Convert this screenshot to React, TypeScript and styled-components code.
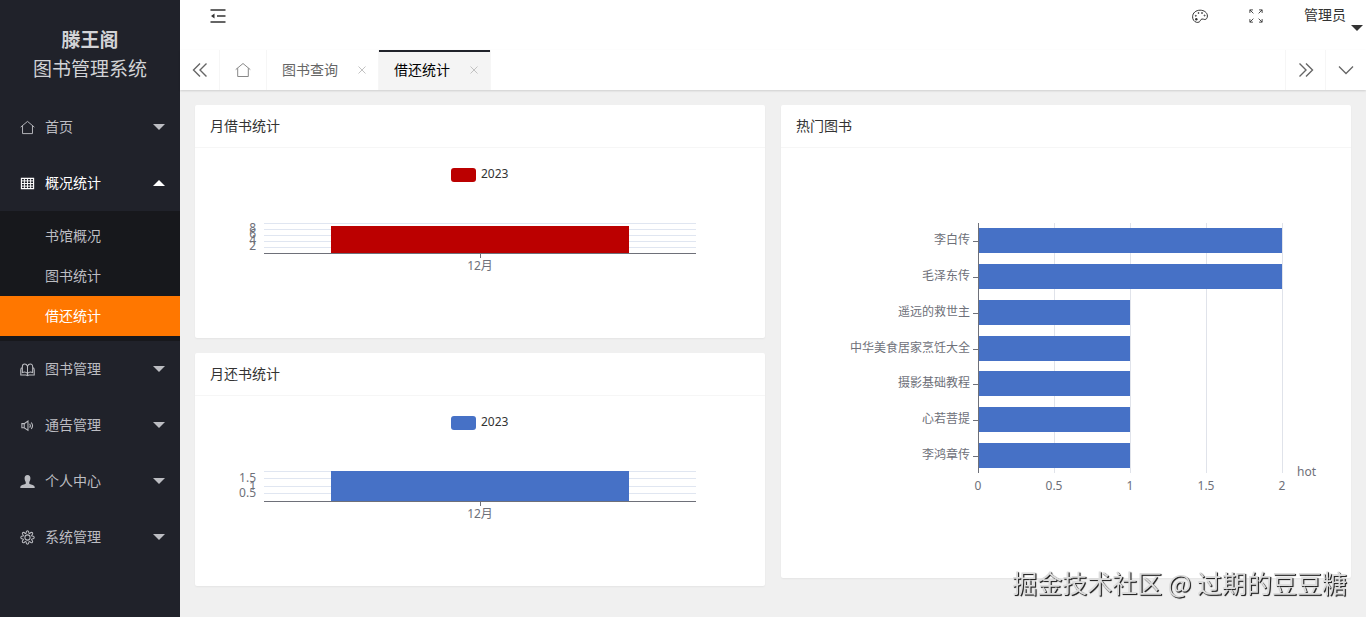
import React from "react";
import styled, { createGlobalStyle, css } from "styled-components";

const GlobalStyle = createGlobalStyle`
  *, *::before, *::after { box-sizing: border-box; }
  body {
    margin: 0;
    background: #f0f0f0;
    color: #333;
    font-family: "Noto Sans", "Noto Sans CJK SC", sans-serif;
    font-size: 14px;
    line-height: 24px;
  }
  a { color: inherit; text-decoration: none; }
  ul { margin: 0; padding: 0; list-style: none; }
  button {
    margin: 0; padding: 0; border: 0; background: none;
    color: inherit; font: inherit; cursor: pointer;
  }
  svg { display: block; flex: none; }
`;

const cjk = `"Noto Sans CJK SC", "Noto Sans", sans-serif`;

const Shell = styled.div`
  display: flex;
  min-height: 100vh;
`;

/* ---------- sidebar ---------- */

const Sidebar = styled.aside`
  flex: none;
  width: 180px;
  background: #20222a;
  color: #bcbdc2;
  font-family: ${cjk};
`;

const Brand = styled.h1`
  margin: 0;
  padding: 24px 0 17px;
  font-size: 19px;
  line-height: 29px;
  font-weight: 400;
  text-align: center;
  color: #d2d3d6;
`;

const BrandName = styled.strong`
  display: block;
  font-weight: 700;
`;

const Group = styled.button<{ $open?: boolean }>`
  display: flex;
  align-items: center;
  width: 100%;
  height: 56px;
  padding: 0 15px 0 20px;
  color: ${(p) => (p.$open ? "#fff" : "inherit")};

  span {
    flex: 1;
    padding-bottom: 2px;
    margin-left: 10px;
    text-align: left;
  }
`;

const SubMenu = styled.ul`
  padding: 5px 0;
  background: #17181c;
`;

const SubLink = styled.a<{ $active?: boolean }>`
  display: block;
  padding: 0 0 2px 45px;
  line-height: 38px;
  ${(p) =>
    p.$active &&
    css`
      background: #ff7700;
      color: #fff;
    `}
`;

/* ---------- header and tabs ---------- */

const Main = styled.div`
  flex: 1;
  min-width: 0;
`;

const TopBar = styled.header`
  display: flex;
  align-items: flex-start;
  justify-content: space-between;
  height: 50px;
  background: #fff;
`;

const TopTools = styled.div`
  display: flex;
`;

const IconButton = styled.button<{ $wide?: boolean }>`
  display: flex;
  align-items: center;
  justify-content: center;
  width: ${(p) => (p.$wide ? 76 : 56)}px;
  height: 32px;
`;

const UserButton = styled.button`
  display: flex;
  align-items: center;
  gap: 5px;
  height: 32px;
  padding: 0 3px 4px 20px;
  font-family: ${cjk};

  svg { margin-top: 28px; }
`;

const TabBar = styled.nav`
  position: relative;
  display: flex;
  height: 40px;
  padding-right: 1px;
  background: #fff;
  box-shadow: 0 1px 2px rgba(0, 0, 0, 0.14);
  color: #666;
`;

const TabControl = styled.button<{ $side: "left" | "right" }>`
  display: flex;
  flex: none;
  align-items: center;
  justify-content: center;
  width: 40px;
  border-${(p) => (p.$side === "left" ? "right" : "left")}: 1px solid #f6f6f6;
`;

const Tabs = styled.ul`
  display: flex;
  flex: 1;
`;

const Tab = styled.li<{ $active?: boolean }>`
  display: flex;
  align-items: center;
  gap: 16px;
  padding: 0 8px 0 15px;
  border-right: 1px solid #f6f6f6;
  font-family: ${cjk};

  a { padding-bottom: 2px; }
  ${(p) =>
    p.$active &&
    css`
      background: #f4f4f4;
      color: #000;
      box-shadow: inset 0 2px #20222a;
    `}
`;

const HomeTab = styled(Tab)`
  padding: 0 15px;
  color: #888;

  a { padding-bottom: 0; }
`;

const CloseButton = styled.button`
  display: flex;
  align-items: center;
  justify-content: center;
  width: 16px;
  height: 16px;
  color: #c2c2c2;
`;

/* ---------- cards ---------- */

const Content = styled.main`
  display: grid;
  grid-template-columns: repeat(2, minmax(0, 1fr));
  align-items: start;
  gap: 16px;
  padding: 15px;
`;

const Column = styled.div`
  display: grid;
  gap: 15px;
`;

const Card = styled.section`
  border-radius: 2px;
  background: #fff;
  box-shadow: 0 1px 2px rgba(0, 0, 0, 0.05);
`;

const CardTitle = styled.h2`
  margin: 0;
  padding: 0 15px 2px;
  border-bottom: 1px solid #f6f6f6;
  font-family: ${cjk};
  font-size: 14px;
  font-weight: 400;
  line-height: 40px;
`;

const CardBody = styled.div<{ $tail: number }>`
  padding: 15px 15px ${(p) => p.$tail}px;
`;

const Chart = styled.svg`
  width: 100%;
  height: auto;
  font-size: 12px;
  fill: #6e7079;

  rect { shape-rendering: crispEdges; }
  rect[rx] { shape-rendering: auto; }
`;

const Watermark = styled.div`
  position: fixed;
  right: 19px;
  bottom: 17px;
  color: #dcdcdc;
  font-family: ${cjk};
  font-size: 25px;
  line-height: 36px;
  text-shadow: 1px 1px 1px #222, 1px 1px 0 #555;
  white-space: nowrap;
  pointer-events: none;
`;

/* ---------- icons ---------- */

type IconProps = { size?: number; children: React.ReactNode; width?: number };

const Icon = ({ size = 15, width = 1, children }: IconProps) => (
  <svg width={size} height={size} viewBox="0 0 16 16" fill="none" stroke="currentColor" strokeWidth={width} aria-hidden="true">
    {children}
  </svg>
);

const HomeIcon = ({ size }: { size?: number }) => (
  <Icon size={size}>
    <path d="M.7 7.600 8 1.500l7.300 6.100M2.700 6.200v8.300h10.600V6.200" strokeLinejoin="round" />
  </Icon>
);

const GridIcon = () => (
  <Icon>
    <path d="M1.500 2.500h13v11h-13z" strokeWidth="1.200" />
    <path d="M1.500 5.200h13M1.500 8h13M1.500 10.800h13M4.700 2.500v11M8 2.500v11M11.300 2.500v11" />
  </Icon>
);

const BookIcon = () => (
  <Icon width={1.1}>
    <path d="M8 4.500C7.300 2.800 6.300 2.200 5 2.200 3.300 2.200 2.500 3.300 2.500 5v6.300c1.800-.9 4-.6 5.500.9 1.500-1.500 3.700-1.800 5.500-.9V5c0-1.700-.8-2.800-2.500-2.800-1.300 0-2.300.6-3 2.300zM8 4.500v9.300M2.500 5.500C1.500 6 .8 7 .8 8.500v5.300h5.700L8 14.500l1.500-.7h5.700V8.500c0-1.500-.7-2.500-1.700-3" />
  </Icon>
);

const SpeakerIcon = () => (
  <Icon width={1.1}>
    <path d="M2 6h2.500L8.500 3.200v10l-4-2.800H2zM4.500 6v4.400M10.300 6.200c.9 1.200.9 2.900 0 4.100M12 4.800c1.600 2 1.600 4.900 0 6.900" />
  </Icon>
);

const PersonIcon = () => (
  <Icon>
    <path
      d="M8 1c2.100 0 3.200 1.500 3.100 3.800-.1 1.700-.6 2.800-1.200 3.600v1.900c.9.800 4.900 1.200 5.500 2.700.3.700.3 1.300.3 2H.3c0-.7 0-1.300.3-2 .6-1.500 4.600-1.900 5.500-2.700V8.400c-.6-.8-1.100-1.900-1.200-3.600C4.800 2.500 5.900 1 8 1z"
      fill="currentColor"
      stroke="none"
    />
  </Icon>
);

const GearIcon = () => (
  <Icon width={1.1}>
    <path
      d="M6.500 3.200C6.500 1.800 7 .8 8 .8s1.500 1 1.500 2.400c0 .5.600.7 1 .4 1-1 2-1.400 2.700-.7.700.7.300 1.700-.7 2.700-.3.400-.1.900.4.900 1.400 0 2.300.5 2.300 1.500s-.9 1.500-2.300 1.500c-.5 0-.7.600-.4 1 1 1 1.400 2 .7 2.700-.7.700-1.700.3-2.700-.7-.4-.3-1-.1-1 .4 0 1.400-.5 2.300-1.500 2.300s-1.500-.9-1.500-2.300c0-.5-.6-.7-1-.4-1 1-2 1.400-2.700.7-.7-.7-.3-1.700.7-2.700.3-.4.1-1-.4-1C1.700 9.500.8 9 .8 8s.9-1.500 2.300-1.500c.5 0 .7-.5.4-.9-1-1-1.400-2-.7-2.700.7-.7 1.700-.3 2.700.7.400.3 1 .1 1-.4z"
    />
    <circle cx="8" cy="8" r="2.800" />
  </Icon>
);

const FoldIcon = () => (
  <Icon size={16} width={1.5}>
    <path d="M.5 2h15M7 8h8.500M.5 14h15" />
    <path d="M1 8 4.500 5.500v5z" fill="currentColor" stroke="none" />
  </Icon>
);

const PaletteIcon = () => (
  <Icon size={16}>
    <path d="M4.500 14.300C2 13.600.6 11.500.6 8.800c0-3.900 3.300-6.600 7.500-6.600 4 0 7.300 2.400 7.300 5.800 0 2.100-1 3.500-2.600 3.500-1 0-1.800-.7-2.800-.5-1.700.3-1.300 2.100-2.700 2.900-.9.600-1.900.6-2.800.4z" />
    <circle cx="4.300" cy="11.300" r="1.200" fill="currentColor" stroke="none" />
    <circle cx="3.800" cy="7.800" r=".5" />
    <circle cx="6.500" cy="5" r=".5" />
    <circle cx="10" cy="5" r=".5" />
    <circle cx="12.600" cy="7.500" r=".5" />
  </Icon>
);

const FullscreenIcon = () => (
  <Icon size={14}>
    <path d="M1 4.500V1h3.500M1 1l4 4M11.500 1H15v3.500M15 1l-4 4M1 11.500V15h3.500M1 15l4-4M11.500 15H15v-3.500M15 15l-4-4" />
  </Icon>
);

const DoubleChevron = ({ dir }: { dir: "left" | "right" }) => (
  <Icon size={16} width={1.4}>
    <path d={dir === "left" ? "M8 1.500 1.500 8 8 14.500M14.500 1.500 8 8l6.500 6.500" : "M1.500 1.500 8 8l-6.500 6.500M8 1.500 14.500 8 8 14.500"} />
  </Icon>
);

const Caret = ({ up }: { up?: boolean }) => (
  <svg width="12" height="6" viewBox="0 0 12 6" fill="currentColor" aria-hidden="true">
    <path d={up ? "M0 6 6 0l6 6z" : "M0 0h12L6 6z"} />
  </svg>
);

/* ---------- charts ---------- */

type MonthlyProps = {
  label: string;
  color: string;
  barTop: number;
  lines: number[];
  ticks: { text: string; y: number }[];
};

const MonthlyChart = ({ label, color, barTop, lines, ticks }: MonthlyProps) => (
  <Chart viewBox="0 0 540 150" role="img" aria-label={label}>
    <rect x="241" y="5" width="25" height="14" rx="3" fill={color} />
    <text x="271" y="15" fill="#333">2023</text>
    {lines.map((y) => (
      <rect key={y} x="54" y={y} width="432" height="1" fill="#e0e6f1" />
    ))}
    <rect x="121" y={barTop} width="298" height={90 - barTop} fill={color} />
    <rect x="54" y="90" width="432" height="1" fill="#6e7079" />
    <rect x="270" y="90" width="1" height="5" fill="#6e7079" />
    {ticks.map((t) => (
      <text key={t.text} x="46" y={t.y} textAnchor="end">{t.text}</text>
    ))}
    <text x="270" y="107" textAnchor="middle">12月</text>
  </Chart>
);

const books = [
  { name: "李白传", hot: 2 },
  { name: "毛泽东传", hot: 2 },
  { name: "遥远的救世主", hot: 1 },
  { name: "中华美食居家烹饪大全", hot: 1 },
  { name: "摄影基础教程", hot: 1 },
  { name: "心若菩提", hot: 1 },
  { name: "李鸿章传", hot: 1 },
];

const HotChart = () => (
  <Chart viewBox="0 0 540 400" role="img" aria-label="热门图书">
    {[0.5, 1, 1.5, 2].map((v) => (
      <rect key={v} x={182 + v * 152} y="60" width="1" height="250" fill="#e0e3ea" />
    ))}
    {books.map((b, i) => {
      const middle = Math.floor(61 + ((i + 0.5) * 250) / books.length);
      return (
        <g key={b.name}>
          <rect x="182" y={middle - 13} width={b.hot * 152} height="25" fill="#4671c6" />
          <rect x="177" y={middle} width="5" height="1" fill="#6e7079" />
          <text x="174" y={middle + 3} textAnchor="end">{b.name}</text>
        </g>
      );
    })}
    <rect x="182" y="60" width="1" height="250" fill="#6e7079" />
    {[0, 0.5, 1, 1.5, 2].map((v) => (
      <text key={v} x={182 + v * 152} y="327" textAnchor="middle">{v}</text>
    ))}
    <text x="501" y="313">hot</text>
  </Chart>
);

/* ---------- page ---------- */

const menu = [
  { name: "首页", icon: <HomeIcon /> },
  {
    name: "概况统计",
    icon: <GridIcon />,
    children: ["书馆概况", "图书统计", "借还统计"],
  },
  { name: "图书管理", icon: <BookIcon /> },
  { name: "通告管理", icon: <SpeakerIcon /> },
  { name: "个人中心", icon: <PersonIcon /> },
  { name: "系统管理", icon: <GearIcon /> },
];

const current = "借还统计";

export default function App() {
  return (
    <Shell>
      <GlobalStyle />
      <Sidebar>
        <Brand>
          <BrandName>滕王阁</BrandName>
          图书管理系统
        </Brand>
        <nav>
          <ul>
            {menu.map((m) => (
              <li key={m.name}>
                <Group type="button" $open={!!m.children} aria-expanded={!!m.children}>
                  {m.icon}
                  <span>{m.name}</span>
                  <Caret up={!!m.children} />
                </Group>
                {m.children && (
                  <SubMenu>
                    {m.children.map((c) => (
                      <li key={c}>
                        <SubLink href="#" $active={c === current}>{c}</SubLink>
                      </li>
                    ))}
                  </SubMenu>
                )}
              </li>
            ))}
          </ul>
        </nav>
      </Sidebar>

      <Main>
        <TopBar>
          <IconButton type="button" $wide aria-label="收起菜单"><FoldIcon /></IconButton>
          <TopTools>
            <IconButton type="button" aria-label="主题"><PaletteIcon /></IconButton>
            <IconButton type="button" aria-label="全屏"><FullscreenIcon /></IconButton>
            <UserButton type="button">
              管理员
              <Caret />
            </UserButton>
          </TopTools>
        </TopBar>

        <TabBar>
          <TabControl type="button" $side="left" aria-label="向左"><DoubleChevron dir="left" /></TabControl>
          <Tabs>
            <HomeTab><a href="#" aria-label="首页"><HomeIcon size={16} /></a></HomeTab>
            {["图书查询", current].map((t) => (
              <Tab key={t} $active={t === current}>
                <a href="#">{t}</a>
                <CloseButton type="button" aria-label={`关闭${t}`}>
                  <Icon size={8} width={2}><path d="m1 1 14 14M15 1 1 15" /></Icon>
                </CloseButton>
              </Tab>
            ))}
          </Tabs>
          <TabControl type="button" $side="right" aria-label="向右"><DoubleChevron dir="right" /></TabControl>
          <TabControl type="button" $side="right" aria-label="更多">
            <Icon size={16} width={1.3}><path d="m1 4.500 7 7 7-7" /></Icon>
          </TabControl>
        </TabBar>

        <Content>
          <Column>
            <Card>
              <CardTitle>月借书统计</CardTitle>
              <CardBody $tail={25}>
                <MonthlyChart
                  label="月借书统计"
                  color="#bb0000"
                  barTop={63}
                  lines={[60, 66, 72, 78, 84]}
                  ticks={[
                    { text: "8", y: 69 },
                    { text: "6", y: 75 },
                    { text: "4", y: 81 },
                    { text: "2", y: 87 },
                  ]}
                />
              </CardBody>
            </Card>
            <Card>
              <CardTitle>月还书统计</CardTitle>
              <CardBody $tail={25}>
                <MonthlyChart
                  label="月还书统计"
                  color="#4671c6"
                  barTop={60}
                  lines={[60, 67, 75, 82]}
                  ticks={[
                    { text: "1.5", y: 71 },
                    { text: "1", y: 79 },
                    { text: "0.5", y: 86 },
                  ]}
                />
              </CardBody>
            </Card>
          </Column>
          <Card>
            <CardTitle>热门图书</CardTitle>
            <CardBody $tail={15}>
              <HotChart />
            </CardBody>
          </Card>
        </Content>
      </Main>
      <Watermark>掘金技术社区 @ 过期的豆豆糖</Watermark>
    </Shell>
  );
}
